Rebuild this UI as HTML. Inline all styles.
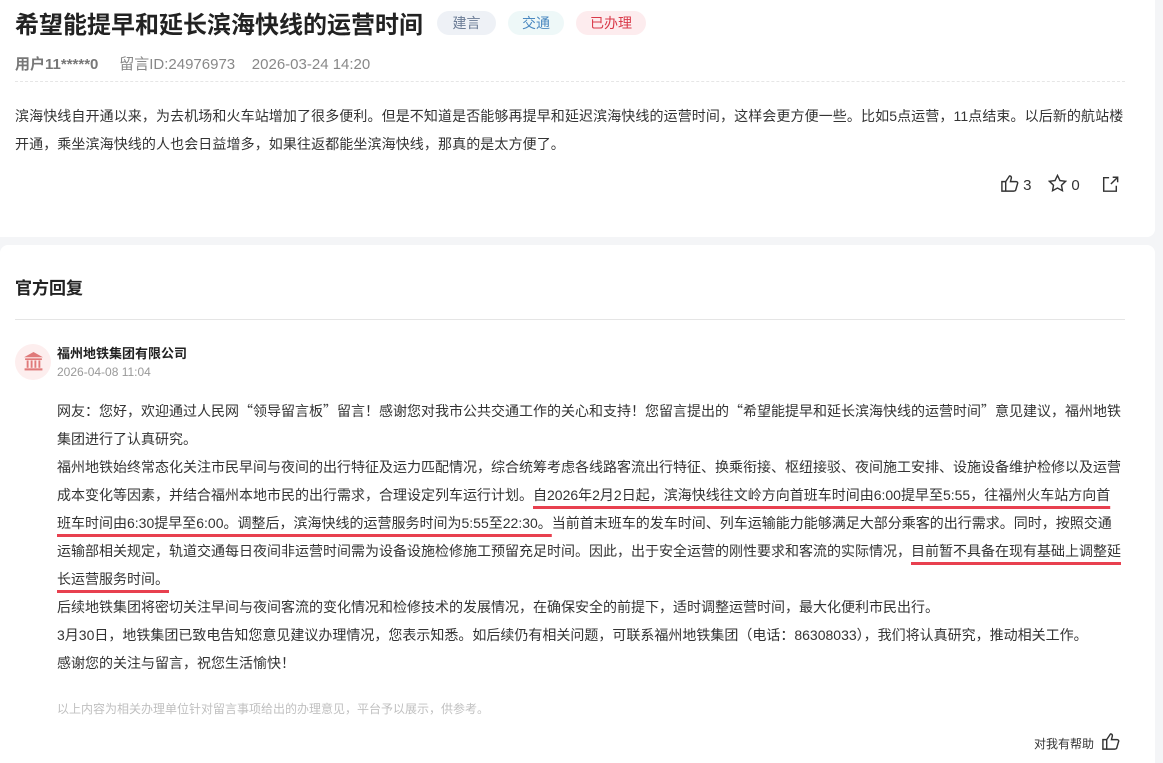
<!DOCTYPE html>
<html><head><meta charset="utf-8"><style>
*{margin:0;padding:0;box-sizing:border-box}
body{width:1163px;height:763px;overflow:hidden;background:#f4f5f7;font-family:"Liberation Sans","Noto Sans CJK SC",sans-serif;color:#333;position:relative}
.card{position:absolute;left:0;width:1155px;background:#fff}
.abs{position:absolute;white-space:nowrap}
.tag{position:absolute;top:11px;height:24px;line-height:24px;border-radius:12px;font-size:14px;text-align:center}
.l{position:absolute;left:57px;font-size:14px;white-space:nowrap;color:#333}
.u{text-decoration:underline;text-decoration-color:#e8404f;text-decoration-thickness:3px;text-underline-offset:6px}
.q{font-family:"Noto Sans CJK SC",sans-serif}
</style></head><body>
<div class="card" style="top:0;height:237px;border-radius:0 0 8px 0">
 <div class="abs" style="left:15px;top:5px;font-size:24px;font-weight:bold;color:#222">希望能提早和延长滨海快线的运营时间</div>
 <div class="tag" style="left:437px;width:59px;background:#eef1f6;color:#6a7b95">建言</div>
 <div class="tag" style="left:508px;width:56px;background:#eef8f8;color:#4a88c0">交通</div>
 <div class="tag" style="left:576px;width:70px;background:#fdecee;color:#d93a4a">已办理</div>
 <div class="abs" style="left:15px;top:53px;font-size:15px;color:#888"><b style="color:#777">用户11*****0</b>&nbsp;&nbsp;&nbsp;&nbsp; 留言ID:24976973&nbsp;&nbsp;&nbsp; 2026-03-24 14:20</div>
 <div style="position:absolute;left:15px;top:81px;width:1110px;border-top:1px dashed #e6e6e6"></div>
 <div class="abs" style="left:15px;top:102px;font-size:14px;line-height:28px;color:#333;letter-spacing:0.1px">滨海快线自开通以来，为去机场和火车站增加了很多便利。但是不知道是否能够再提早和延迟滨海快线的运营时间，这样会更方便一些。比如5点运营，11点结束。以后新的航站楼<br>开通，乘坐滨海快线的人也会日益增多，如果往返都能坐滨海快线，那真的是太方便了。</div>
 <div class="abs" style="left:1000px;top:174px;font-size:15px;color:#333">
  <svg width="19" height="19" viewBox="0 0 20 20" style="vertical-align:-3px" fill="none" stroke="#333" stroke-width="1.5"><path d="M2 8h4v10H2zM6 8l4-6c1.5 0 2 1 2 2l-1 4h6c1 0 2 1 1.5 2l-2 7c-.3.7-1 1-2 1H6"/></svg> 3
  &nbsp;&nbsp;&nbsp;<svg width="19" height="19" viewBox="0 0 20 20" style="vertical-align:-3px" fill="none" stroke="#333" stroke-width="1.5"><path d="M10 1.5l2.6 5.4 5.9.8-4.3 4.1 1 5.8L10 14.8l-5.2 2.8 1-5.8L1.5 7.7l5.9-.8z"/></svg> 0
  &nbsp;&nbsp;&nbsp;&nbsp;<svg width="18" height="18" viewBox="0 0 20 20" style="vertical-align:-3px" fill="none" stroke="#333" stroke-width="1.6"><path d="M9 3H3v15h14v-6M11 10l7-7M13 2.5h5.5V8"/></svg>
 </div>
</div>
<div class="card" style="top:245px;height:518px;border-radius:8px 8px 0 0">
 <div class="abs" style="left:15px;top:29px;font-size:17px;font-weight:bold;color:#222">官方回复</div>
 <div style="position:absolute;left:15px;top:74px;width:1110px;border-top:1px solid #e5e5e5"></div>
 <div style="position:absolute;left:15px;top:99px;width:36px;height:36px;border-radius:50%;background:#fdeeee"></div>
 <svg style="position:absolute;left:23px;top:106px" width="21" height="21" viewBox="0 0 20 20" fill="#e07a7a"><path d="M10 1L1 6h18z"/><rect x="2" y="7" width="16" height="1.6"/><rect x="3.5" y="9" width="1.8" height="7"/><rect x="7.3" y="9" width="1.8" height="7"/><rect x="10.9" y="9" width="1.8" height="7"/><rect x="14.7" y="9" width="1.8" height="7"/><rect x="1.5" y="16.5" width="17" height="2"/></svg>
 <div class="abs" style="left:57px;top:98px;font-size:13px;font-weight:bold;color:#222">福州地铁集团有限公司</div>
 <div class="abs" style="left:57px;top:120px;font-size:12px;color:#999">2026-04-08 11:04</div>
</div>
<div class="l" style="top:401px">网友：您好，欢迎通过人民网<span class="q">“</span>领导留言板<span class="q">”</span>留言！感谢您对我市公共交通工作的关心和支持！您留言提出的<span class="q">“</span>希望能提早和延长滨海快线的运营时间<span class="q">”</span>意见建议，福州地铁</div>
<div class="l" style="top:429px">集团进行了认真研究。</div>
<div class="l" style="top:457px">福州地铁始终常态化关注市民早间与夜间的出行特征及运力匹配情况，综合统筹考虑各线路客流出行特征、换乘衔接、枢纽接驳、夜间施工安排、设施设备维护检修以及运营</div>
<div class="l" style="top:485px">成本变化等因素，并结合福州本地市民的出行需求，合理设定列车运行计划。<span class="u">自2026年2月2日起，滨海快线往文岭方向首班车时间由6:00提早至5:55，往福州火车站方向首</span></div>
<div class="l" style="top:513px"><span class="u">班车时间由6:30提早至6:00。调整后，滨海快线的运营服务时间为5:55至22:30。</span>当前首末班车的发车时间、列车运输能力能够满足大部分乘客的出行需求。同时，按照交通</div>
<div class="l" style="top:541px">运输部相关规定，轨道交通每日夜间非运营时间需为设备设施检修施工预留充足时间。因此，出于安全运营的刚性要求和客流的实际情况，<span class="u">目前暂不具备在现有基础上调整延</span></div>
<div class="l" style="top:569px"><span class="u">长运营服务时间。</span></div>
<div class="l" style="top:597px">后续地铁集团将密切关注早间与夜间客流的变化情况和检修技术的发展情况，在确保安全的前提下，适时调整运营时间，最大化便利市民出行。</div>
<div class="l" style="top:625px">3月30日，地铁集团已致电告知您意见建议办理情况，您表示知悉。如后续仍有相关问题，可联系福州地铁集团（电话：86308033），我们将认真研究，推动相关工作。</div>
<div class="l" style="top:653px">感谢您的关注与留言，祝您生活愉快！</div>
<div class="abs" style="left:57px;top:700px;font-size:12px;color:#c0c0c0">以上内容为相关办理单位针对留言事项给出的办理意见，平台予以展示，供参考。</div>
<div class="abs" style="left:1034px;top:732px;font-size:12px;color:#333">对我有帮助 <svg width="19" height="19" viewBox="0 0 20 20" style="vertical-align:-3px;margin-left:4px" fill="none" stroke="#333" stroke-width="1.5"><path d="M2 8h4v10H2zM6 8l4-6c1.5 0 2 1 2 2l-1 4h6c1 0 2 1 1.5 2l-2 7c-.3.7-1 1-2 1H6"/></svg></div>
</body></html>
